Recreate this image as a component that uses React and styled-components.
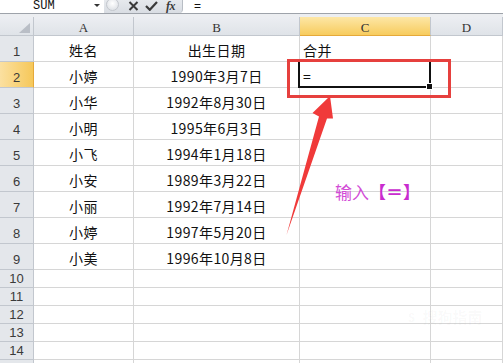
import React from "react";
import styled, { createGlobalStyle, css } from "styled-components";

const Global = createGlobalStyle`
  html, body { margin: 0; padding: 0; background: #fff; overflow: hidden; }
  #root { width: 503px; height: 363px; }
`;

const Page = styled.div`
  position: relative;
  width: 503px;
  height: 363px;
  overflow: hidden;
  background: #fff;
  font-family: "Noto Sans CJK SC", sans-serif;
`;

const FormulaBar = styled.div`
  display: flex;
  align-items: stretch;
  height: 13px;
  border-bottom: 1px solid #9ea3aa;
  background: #fff;
`;

const NameBox = styled.div`
  width: 104px;
  box-sizing: border-box;
  padding-left: 33px;
  padding-right: 4px;
  display: flex;
  align-items: center;
  justify-content: space-between;
`;

const NameText = styled.span`
  font-family: "Liberation Mono", monospace;
  font-size: 12px;
  line-height: 13px;
  color: #111;
`;

const DropArrow = styled.span`
  width: 0;
  height: 0;
  border-left: 3px solid transparent;
  border-right: 3px solid transparent;
  border-top: 3px solid #333;
  margin-top: -2px;
`;

const FxGroup = styled.div`
  width: 78px;
  background: linear-gradient(#e6e9ed, #d9dde3);
  border-radius: 0 0 4px 0;
  display: flex;
  align-items: center;
  border-right: 1px solid #b8bdc4;
`;

const Knob = styled.span`
  width: 13px;
  height: 13px;
  margin-left: 2px;
  margin-top: -4px;
  border-radius: 50%;
  border: 1px solid #c3c7cd;
  box-sizing: border-box;
  background: radial-gradient(circle at 50% 40%, #ffffff, #e2e5e9 70%);
`;

const FxIcon = styled.svg`
  display: block;
  margin-left: ${(p) => p.$gap}px;
  margin-top: -2px;
`;

const FxText = styled.span`
  margin-left: 8px;
  font-family: "Liberation Serif", serif;
  font-style: italic;
  font-weight: bold;
  font-size: 12px;
  line-height: 13px;
  color: #3a3a3a;
  letter-spacing: -0.5px;
`;

const FormulaText = styled.div`
  padding-left: 11px;
  font-family: "Liberation Sans", sans-serif;
  font-size: 12px;
  line-height: 13px;
  color: #111;
`;

const BarGap = styled.div`
  height: 3px;
  background: #eceef1;
`;

const Sheet = styled.div`
  display: grid;
  grid-template-columns: 34px 100px 166px 131px 72px;
  grid-template-rows: 19px repeat(9, 26px) repeat(6, 18px);
`;

const headBase = css`
  box-sizing: border-box;
  border-right: 1px solid #c2c7ce;
  border-bottom: 1px solid #c2c7ce;
  color: #333;
  display: flex;
`;

const Corner = styled.div`
  ${headBase};
  background: linear-gradient(#eceef2, #dfe3e8);
  justify-content: flex-end;
  align-items: flex-end;
  padding: 0 3px 2px 0;
`;

const CornerTri = styled.span`
  width: 0;
  height: 0;
  border-left: 11px solid transparent;
  border-bottom: 10px solid #b9bec6;
`;

const ColHead = styled.div`
  ${headBase};
  background: ${(p) =>
    p.$active
      ? "linear-gradient(#fde7a6, #f7cc5e)"
      : "linear-gradient(#eceef2, #dfe3e8)"};
  ${(p) => p.$active && "border-bottom-color: #e5a93a;"}
  justify-content: center;
  align-items: center;
  padding-top: 3px;
  font-family: "Liberation Serif", serif;
  font-size: 13px;
`;

const RowHead = styled.div`
  ${headBase};
  background: ${(p) =>
    p.$active ? "linear-gradient(90deg, #fbe0a0, #f6c85a)" : "#e4e7eb"};
  ${(p) => p.$active && "border-right-color: #e5a93a;"}
  justify-content: center;
  align-items: flex-end;
  padding-bottom: ${(p) => (p.$tall ? 2 : 1)}px;
  font-family: "Liberation Sans", sans-serif;
  font-size: 13px;
  line-height: 14px;
  color: #3a3a3a;
`;

const Cell = styled.div`
  position: relative;
  box-sizing: border-box;
  border-right: 1px solid #d6d6d6;
  border-bottom: 1px solid #d6d6d6;
  display: flex;
  align-items: center;
  justify-content: ${(p) => (p.$align === "left" ? "flex-start" : "center")};
  padding: 2px 0 0 ${(p) => (p.$align === "left" ? 3 : 0)}px;
  font-size: 14px;
  letter-spacing: 0.4px;
  color: #111;
  white-space: nowrap;
  ${(p) =>
    p.$selected &&
    css`
      z-index: 1;
      &::after {
        content: "";
        position: absolute;
        top: -2px;
        left: -2px;
        right: -1px;
        bottom: -1px;
        border: 2px solid #111;
      }
      &::before {
        content: "";
        position: absolute;
        right: -3px;
        bottom: -3px;
        width: 5px;
        height: 5px;
        background: #111;
        border: 1px solid #fff;
        z-index: 2;
      }
    `}
`;

const Highlight = styled.div`
  position: absolute;
  left: 287px;
  top: 59px;
  width: 164px;
  height: 39px;
  box-sizing: border-box;
  border: 3px solid #e6403e;
  z-index: 3;
`;

const Arrow = styled.svg`
  position: absolute;
  left: 280px;
  top: 90px;
  z-index: 3;
`;

const Note = styled.div`
  position: absolute;
  left: 335px;
  top: 182px;
  font-size: 17px;
  line-height: 20px;
  color: #d24cd6;
  white-space: nowrap;
  z-index: 3;
`;

const NoteMark = styled.span`
  color: #c92ccf;
  font-weight: bold;
`;

const Watermark = styled.div`
  position: absolute;
  left: 404px;
  top: 306px;
  font-size: 15px;
  font-weight: bold;
  color: rgba(120, 120, 120, 0.04);
  white-space: nowrap;
  z-index: 3;
`;

const data = [
  ["姓名", "出生日期", "合并"],
  ["小婷", "1990年3月7日", "="],
  ["小华", "1992年8月30日", ""],
  ["小明", "1995年6月3日", ""],
  ["小飞", "1994年1月18日", ""],
  ["小安", "1989年3月22日", ""],
  ["小丽", "1992年7月14日", ""],
  ["小婷", "1997年5月20日", ""],
  ["小美", "1996年10月8日", ""],
  ["", "", ""],
  ["", "", ""],
  ["", "", ""],
  ["", "", ""],
  ["", "", ""],
  ["", "", ""],
];

export default function App() {
  return (
    <Page>
      <Global />
      <FormulaBar>
        <NameBox>
          <NameText>SUM</NameText>
          <DropArrow />
        </NameBox>
        <FxGroup>
          <Knob />
          <FxIcon $gap={9} width="11" height="10" viewBox="0 0 11 10">
            <path d="M1.5 1 L9.5 9 M9.5 1 L1.5 9" stroke="#3a3a3a" strokeWidth="2" fill="none" />
          </FxIcon>
          <FxIcon $gap={6} width="13" height="10" viewBox="0 0 13 10">
            <path d="M1 5 L4.8 8.8 L12 1" stroke="#3a3a3a" strokeWidth="2.2" fill="none" />
          </FxIcon>
          <FxText>fx</FxText>
        </FxGroup>
        <FormulaText>=</FormulaText>
      </FormulaBar>
      <BarGap />
      <Sheet>
        <Corner>
          <CornerTri />
        </Corner>
        {["A", "B", "C", "D"].map((c) => (
          <ColHead key={c} $active={c === "C"}>
            {c}
          </ColHead>
        ))}
        {data.map((row, i) => (
          <React.Fragment key={i}>
            <RowHead $active={i === 1} $tall={i < 9}>
              {i < 14 ? i + 1 : ""}
            </RowHead>
            <Cell>{row[0]}</Cell>
            <Cell>{row[1]}</Cell>
            <Cell $align="left" $selected={i === 1}>
              {row[2]}
            </Cell>
            <Cell />
          </React.Fragment>
        ))}
      </Sheet>
      <Highlight />
      <Arrow width="60" height="150" viewBox="280 90 60 150">
        <polygon
          points="330,96 333,118.5 327,118.5 286.5,235 319,116.5 312.5,113"
          fill="#f03a3a"
        />
      </Arrow>
      <Note>
        输入<NoteMark>【＝】</NoteMark>
      </Note>
      <Watermark>Ⓢ 搜狗指南</Watermark>
    </Page>
  );
}
